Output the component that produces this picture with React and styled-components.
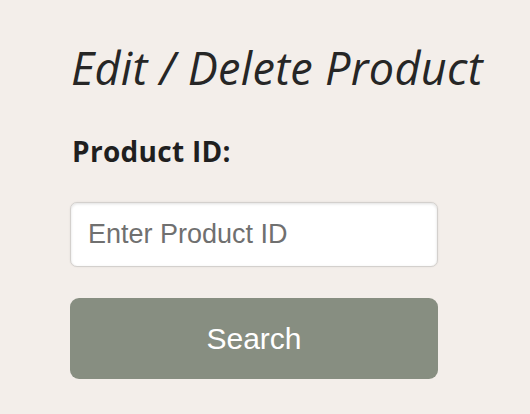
import React from "react";
import styled, { createGlobalStyle } from "styled-components";

const Global = createGlobalStyle`
  html, body { margin: 0; padding: 0; background: #f3eeea; }
  body { font-family: "Open Sans", "Noto Sans", sans-serif; }
`;

const Page = styled.div`
  width: 530px;
  height: 414px;
  box-sizing: border-box;
  padding: 38px 0 0 70px;
  background: #f3eeea;
`;

const Title = styled.h1`
  margin: 0 0 0 1px;
  font-family: "Open Sans", "Noto Sans", sans-serif;
  font-style: italic;
  font-weight: 400;
  font-size: 45px;
  line-height: 60px;
  letter-spacing: 0.3px;
  color: #262626;
  white-space: nowrap;
`;

const Label = styled.label`
  display: block;
  margin: 35px 0 0 2px;
  font-family: "Open Sans", "Noto Sans", sans-serif;
  font-weight: 700;
  font-size: 28px;
  line-height: 36px;
  letter-spacing: 0.3px;
  color: #1f1f1f;
`;

const Form = styled.div`
  display: flex;
  flex-direction: column;
  gap: 31px;
  width: 368px;
  margin-top: 33px;
`;

const Input = styled.input`
  box-sizing: border-box;
  width: 100%;
  height: 65px;
  padding: 0 17px;
  border: 1px solid #d3d0cd;
  border-radius: 7px;
  background: #fff;
  box-shadow: inset 0 1px 3px rgba(0, 0, 0, 0.12), 0 0 2px rgba(0, 0, 0, 0.08);
  font-family: "Liberation Sans", Arial, sans-serif;
  font-size: 27px;
  color: #333;
  outline: none;
  &::placeholder { color: #707070; }
`;

const Button = styled.button`
  box-sizing: border-box;
  width: 100%;
  height: 81px;
  border: none;
  border-radius: 9px;
  background: #878e81;
  color: #fff;
  font-family: "Liberation Sans", Arial, sans-serif;
  font-size: 30px;
  cursor: pointer;
`;

export default function App() {
  return (
    <>
      <Global />
      <Page>
        <Title>Edit / Delete Product</Title>
        <Label htmlFor="pid">Product ID:</Label>
        <Form>
          <Input id="pid" placeholder="Enter Product ID" />
          <Button>Search</Button>
        </Form>
      </Page>
    </>
  );
}
